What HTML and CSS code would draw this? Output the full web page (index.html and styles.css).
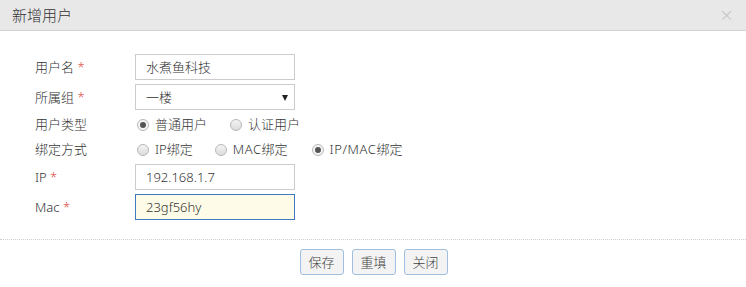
FILE: index.html
```html
<!DOCTYPE html>
<html lang="zh">
<head>
<meta charset="utf-8">
<title>新增用户</title>
<link rel="stylesheet" href="styles.css">
</head>
<body>
<div class="dialog">
  <div class="header">
    <span class="title">新增用户</span>
    <span class="close">×</span>
  </div>
  <div class="body">
    <div class="row row-input">
      <label class="lbl">用户名 <em>*</em></label>
      <div class="input">水煮鱼科技</div>
    </div>
    <div class="row row-input row-sel">
      <label class="lbl">所属组 <em>*</em></label>
      <div class="input select">一楼<span class="caret"></span></div>
    </div>
    <div class="row row-radio">
      <label class="lbl">用户类型</label>
      <div class="radios">
        <span class="radio on"><i></i>普通用户</span>
        <span class="radio"><i></i>认证用户</span>
      </div>
    </div>
    <div class="row row-radio row-radio2">
      <label class="lbl">绑定方式</label>
      <div class="radios">
        <span class="radio"><i></i>IP绑定</span>
        <span class="radio"><i></i><span class="lat">MAC</span>绑定</span>
        <span class="radio on"><i></i><span class="lat">IP/MAC</span>绑定</span>
      </div>
    </div>
    <div class="row row-input">
      <label class="lbl">IP <em>*</em></label>
      <div class="input">192.168.1.7</div>
    </div>
    <div class="row row-input">
      <label class="lbl">Mac <em>*</em></label>
      <div class="input focus">23gf56hy</div>
    </div>
  </div>
  <div class="footer">
    <button class="btn">保存</button>
    <button class="btn">重填</button>
    <button class="btn">关闭</button>
  </div>
</div>
</body>
</html>
```
FILE: styles.css
```css
* { box-sizing: border-box; }
html, body { margin: 0; padding: 0; background: #fff; }
body {
  font-family: "Noto Sans", "Noto Sans CJK SC", sans-serif;
  font-size: 13px;
  font-weight: 300;
  color: #333;
  width: 746px;
  height: 287px;
  overflow: hidden;
}
.header {
  height: 31px;
  background: #e8e8e8;
  border-bottom: 1px solid #d2d2d2;
  display: flex;
  align-items: center;
  justify-content: space-between;
  padding: 0 12px 0 12px;
}
.title { font-size: 15px; color: #333; line-height: 1; }
.close { font-size: 18px; color: #c4c4c4; font-family: "DejaVu Sans", sans-serif; line-height: 1; }
.body {
  padding: 23px 0 0 35px;
  height: 209px;
  border-bottom: 1px dotted #cfcfcf;
}
.row { display: flex; align-items: center; }
.lbl { width: 100px; line-height: 1; }
.lbl em { color: #e04a3f; font-style: normal; }
.row-input { height: 26px; margin-bottom: 4px; }
.row-sel { margin-bottom: 2px; }
.row-radio { height: 25px; }
.row-radio2 { margin-bottom: 2px; }
.input {
  width: 160px;
  height: 26px;
  border: 1px solid #cccccc;
  background: #fff;
  padding: 0 10px;
  display: flex;
  align-items: center;
  line-height: 1;
  color: #333;
  position: relative;
}
.input.focus { border-color: #3e7ac2; background: #fefbe8; }
.caret {
  position: absolute;
  right: 6px;
  top: 10px;
  width: 0; height: 0;
  border-left: 3px solid transparent;
  border-right: 3px solid transparent;
  border-top: 6px solid #222;
}
.radios { display: flex; align-items: center; padding-left: 2px; }
.radio { display: flex; align-items: center; line-height: 1; }
.lat { letter-spacing: 0.6px; }
.radio i {
  width: 12px; height: 12px;
  border-radius: 50%;
  border: 1px solid #b8b8b8;
  background: linear-gradient(#f4f4f4, #dcdcdc);
  margin-right: 6px;
  position: relative;
}
.radio.on i { background: #f4f4f4; }
.radio.on i::after {
  content: "";
  position: absolute;
  left: 2px; top: 2px;
  width: 6px; height: 6px;
  border-radius: 50%;
  background: #555;
}
.row-radio .radios .radio:nth-child(1) { margin-right: 23px; }
.row-radio2 .radios .radio:nth-child(1) { margin-right: 22px; }
.row-radio2 .radios .radio:nth-child(2) { margin-right: 24px; }
.footer {
  display: flex;
  justify-content: center;
  gap: 8px;
  padding-top: 9px;
  padding-left: 1px;
}
.btn {
  width: 44px;
  height: 26px;
  border: 1px solid #9fbfe0;
  border-radius: 3px;
  background: #f3f3f3;
  font-family: inherit;
  font-weight: 300;
  font-size: 13px;
  color: #444;
  padding: 0;
  line-height: 1;
}
```
